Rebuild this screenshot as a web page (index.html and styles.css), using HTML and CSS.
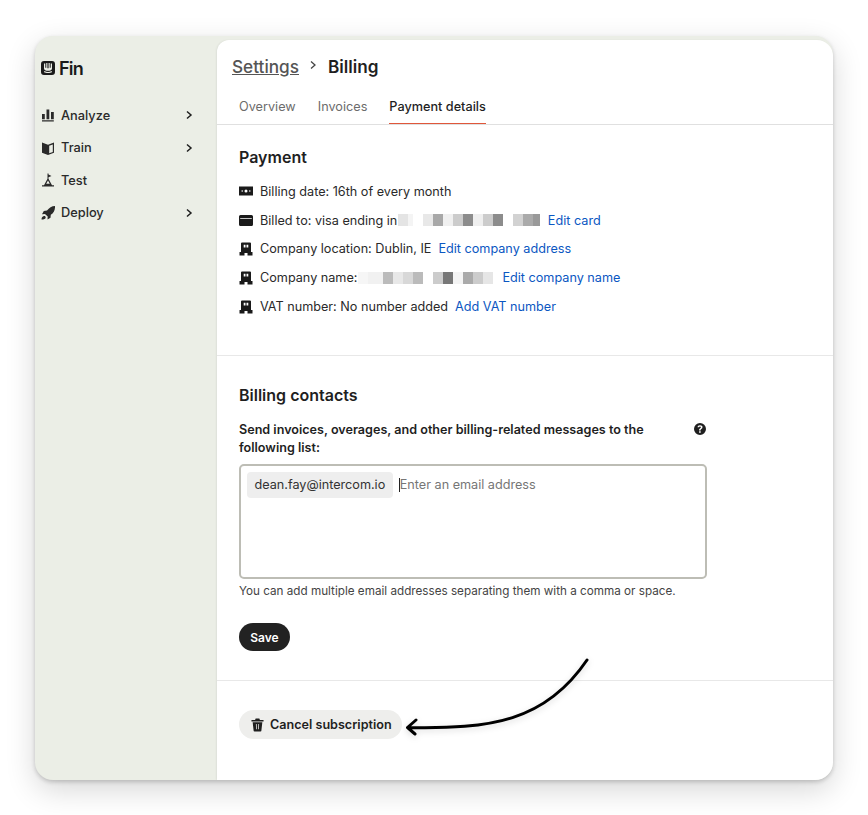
FILE: index.html
```html
<!DOCTYPE html>
<html lang="en">
<head>
    <meta charset="UTF-8">
    <title>Billing</title>
    <link rel="stylesheet" href="styles.css">
</head>
<body>

<div class="window">
    <div class="sidebar">
        <div class="logo">
            <svg class="logo-icon" viewBox="0 0 14 14"><path fill-rule="evenodd" d="M3 0h8a3 3 0 0 1 3 3v8a3 3 0 0 1-3 3H3a3 3 0 0 1-3-3V3a3 3 0 0 1 3-3zM3 2.500v5C3 9.200 4.800 9.800 7 9.800s4-.6 4-2.300v-5h-1.300v4.300H8.700V2H7.600v5.200H6.400V2H5.300v4.800H4.300V2.500zM3.500 10l-.6.900C4 11.700 5.500 12 7 12s3-.3 4.100-1.100l-.6-.9c-.9.6-2.200.9-3.500.9s-2.600-.3-3.500-.9z"/></svg>
            <span>Fin</span>
        </div>
        <nav class="nav">
            <div class="nav-item">
                <svg class="nav-icon" viewBox="0 0 14 14"><path d="M1 6h2.800v5.200H1zM5.500 1.500h2.800v9.700H5.500zM10 4h2.800v7.200H10zM1 12.200h11.800v1.300H1z"/></svg>
                <span class="nav-label">Analyze</span>
                <svg class="nav-chevron" viewBox="0 0 10 10"><path d="M3 1.500 7 5 3 8.500"/></svg>
            </div>
            <div class="nav-item">
                <svg class="nav-icon" viewBox="0 0 14 14"><path fill-rule="evenodd" d="M1 1.500l6 2.300 6-2.300v10.200l-6 2.300-6-2.300zM8.200 4.700v7.500l3.600-1.300V3.400z"/></svg>
                <span class="nav-label">Train</span>
                <svg class="nav-chevron" viewBox="0 0 10 10"><path d="M3 1.500 7 5 3 8.500"/></svg>
            </div>
            <div class="nav-item">
                <svg class="nav-icon" viewBox="0 0 14 14"><path fill-rule="evenodd" d="M6.500.5h1v1L10.500 3 7.500 4.300v1.500L11 12.300h2v1.200H1v-1.200h2L6.500 5.800zM7 7.500 5.200 10.800h3.600z"/></svg>
                <span class="nav-label">Test</span>
            </div>
            <div class="nav-item">
                <svg class="nav-icon" viewBox="0 0 14 14"><path d="M14 0c.2 3.800-1.200 6.700-4.200 8.800l-.3 3-3 1.700.2-3-2.700-2.600-3 .3L2.800 5l3.200-.4C8.200 1.700 10.700.1 14 0zM3.300 10c.8 0 1.400.6 1.400 1.400 0 1.300-1.800 2.100-4.200 2.200 0-2.200 1.300-3.600 2.800-3.600z"/></svg>
                <span class="nav-label">Deploy</span>
                <svg class="nav-chevron" viewBox="0 0 10 10"><path d="M3 1.500 7 5 3 8.500"/></svg>
            </div>
        </nav>
    </div>

    <div class="main">
        <div class="header">
            <div class="breadcrumb">
                <a class="crumb-link">Settings</a>
                <svg class="crumb-chevron" viewBox="0 0 10 10"><path d="M3 1.500 7 5 3 8.500"/></svg>
                <span class="crumb-current">Billing</span>
            </div>
            <div class="tabs">
                <span class="tab">Overview</span>
                <span class="tab">Invoices</span>
                <span class="tab tab-active">Payment details</span>
            </div>
        </div>

        <div class="section section-payment">
            <h2>Payment</h2>
            <div class="rows">
                <div class="row">
                    <svg class="row-icon" viewBox="0 0 14 14"><path fill-rule="evenodd" d="M0 2.500h14v9H0zM7 5.500a1.500 1.500 0 1 0 0 3 1.500 1.500 0 0 0 0-3zM3.200 6.200a.8.8 0 1 0 0 1.600.8.8 0 0 0 0-1.600zM10.800 6.200a.8.8 0 1 0 0 1.600.8.8 0 0 0 0-1.600z"/></svg>
                    <span>Billing date: 16th of every month</span>
                </div>
                <div class="row">
                    <svg class="row-icon" viewBox="0 0 14 14"><path fill-rule="evenodd" d="M1.500 2h11A1.500 1.500 0 0 1 14 3.500v8a1.500 1.500 0 0 1-1.500 1.500h-11A1.500 1.500 0 0 1 0 11.500v-8A1.500 1.500 0 0 1 1.500 2zM1.200 5.200v.8h11.600v-.8z"/></svg>
                    <span>Billed to: visa ending in</span>
                    <span class="redacted redacted-card"></span>
                    <a class="link link-card">Edit card</a>
                </div>
                <div class="row">
                    <svg class="row-icon" viewBox="0 0 14 14"><use href="#building"/></svg>
                    <span>Company location: Dublin, IE</span>
                    <a class="link">Edit company address</a>
                </div>
                <div class="row">
                    <svg class="row-icon" viewBox="0 0 14 14"><use href="#building"/></svg>
                    <span>Company name:</span>
                    <span class="redacted redacted-company"></span>
                    <a class="link link-company">Edit company name</a>
                </div>
                <div class="row">
                    <svg class="row-icon" viewBox="0 0 14 14"><use href="#building"/></svg>
                    <span>VAT number: No number added</span>
                    <a class="link">Add VAT number</a>
                </div>
            </div>
        </div>

        <div class="section section-contacts">
            <h2>Billing contacts</h2>
            <div class="contacts-form">
                <div class="field-label">
                    <span>Send invoices, overages, and other billing-related messages to the following list:</span>
                    <svg class="help-icon" viewBox="0 0 12 12"><path fill-rule="evenodd" d="M6 0a6 6 0 1 1 0 12A6 6 0 0 1 6 0zM5.100 8.300v1.500h1.600V8.300zM6 2.200c-1.500 0-2.400.8-2.500 2.100h1.500c.1-.6.4-.9 1-.9s.9.300.9.800c0 .4-.2.700-.7 1-.8.500-1.100 1-1.100 1.900v.3h1.500v-.2c0-.5.200-.8.700-1.100.8-.5 1.200-1.100 1.200-2 0-1.200-1-1.900-2.500-1.900z"/></svg>
                </div>
                <div class="email-box">
                    <span class="email-chip">dean.fay@intercom.io</span>
                    <span class="caret"></span>
                    <span class="placeholder">Enter an email address</span>
                </div>
                <p class="hint">You can add multiple email addresses separating them with a comma or space.</p>
            </div>
            <button class="btn-save">Save</button>
        </div>

        <div class="section section-cancel">
            <button class="btn-cancel">
                <svg class="trash-icon" viewBox="0 0 14 14"><path fill-rule="evenodd" d="M5 0h4l.6 1.500H13.500v1.800H.5V1.500h3.900zM1.800 4h10.400l-1 9a1 1 0 0 1-1 1H3.800a1 1 0 0 1-1-1zM5.300 6l.2 5.500h.8L6.100 6zM7.900 6l-.2 5.500h.8L8.700 6z"/></svg>
                Cancel subscription
            </button>
        </div>
    </div>
</div>

<!-- annotation over the screenshot -->
<svg class="arrow" viewBox="0 0 868 815">
    <path d="M587 660C545 722 490 729 408 727.500M416 720 407.500 727.500 415 734"/>
</svg>

<svg class="defs" width="0" height="0">
    <symbol id="building" viewBox="0 0 14 14">
        <path fill-rule="evenodd" d="M3 .5h8a1 1 0 0 1 1 1V10h1.500v3.500h-5V11h-3v2.500h-5V10H2V1.500a1 1 0 0 1 1-1zM4.700 2.800v2.700h1.800V2.800zM7.500 2.800v2.700h1.800V2.800z"/>
    </symbol>
</svg>

</body>
</html>
```

FILE: styles.css
```css
html, body {
    margin: 0;
    padding: 0;
}
body {
    width: 868px;
    height: 815px;
    background-color: #fff;
    font-family: Inter, "Liberation Sans", sans-serif;
    color: #1f1f1f;
    position: relative;
    overflow: hidden;
    padding: 36px 35px 35px;
    box-sizing: border-box;
}
svg {
    fill: currentColor;
}
.defs {
    position: absolute;
}

/* Window */
.window {
    display: flex;
    height: 744px;
    background-color: #ebeee6;
    border-radius: 18px;
    box-shadow: 0 2px 4px rgba(0, 0, 0, 0.18), 0 10px 30px rgba(0, 0, 0, 0.16);
    overflow: hidden;
}

/* Sidebar */
.sidebar {
    width: 182px;
    flex-shrink: 0;
    padding: 22px 6px 0;
    box-sizing: border-box;
}
.logo {
    display: flex;
    align-items: center;
    gap: 4px;
    font-size: 18px;
    font-weight: 600;
    letter-spacing: -0.8px;
    color: #1a1a1a;
    height: 20px;
}
.logo-icon {
    width: 14px;
    height: 14px;
}
.nav {
    margin-top: 20.800px;
}
.nav-item {
    display: flex;
    align-items: center;
    height: 32.500px;
    font-size: 12.800px;
    font-weight: 500;
    color: #2a2a2a;
}
.nav-icon {
    width: 14px;
    height: 14px;
    margin-right: 6px;
}
.nav-label {
    flex: 1;
}
.nav-chevron {
    width: 10px;
    height: 10px;
    margin-right: 17px;
    fill: none;
    stroke: #1f1f1f;
    stroke-width: 1.500;
}

/* Main panel */
.main {
    flex: 1;
    margin-top: 4px;
    background-color: #fff;
    border-radius: 12px 16px 0 0;
    box-shadow: -1px 0 2px rgba(0, 0, 0, 0.06);
}
.header {
    padding: 0 22px;
    border-bottom: 1px solid #e0e0e0;
    height: 85px;
    box-sizing: border-box;
}
.breadcrumb {
    display: flex;
    align-items: center;
    height: 52px;
    margin-left: -7px;
    font-size: 17.200px;
    font-weight: 600;
}
.crumb-link {
    font-weight: 500;
    color: #555;
    text-decoration: underline;
}
.crumb-chevron {
    width: 10px;
    height: 10px;
    margin: 0 10px 2px 9px;
    fill: none;
    stroke: #444;
    stroke-width: 1.300;
}
.tabs {
    display: flex;
    gap: 22px;
    height: 32px;
    font-size: 12.700px;
}
.tab {
    color: #6c6c6c;
    font-weight: 400;
    line-height: 30px;
    height: 32px;
    box-sizing: border-box;
}
.tab-active {
    color: #1f1f1f;
    font-weight: 500;
    border-bottom: 1px solid #e0573a;
}

/* Sections */
.section {
    padding: 0 22px;
    border-bottom: 1px solid #e8e8e8;
}
.section h2 {
    margin: 0;
    font-size: 16px;
    font-weight: 600;
    line-height: 20px;
}
.section-payment {
    padding-top: 22px;
    height: 231px;
    box-sizing: border-box;
}
.rows {
    margin-top: 10px;
}
.row {
    display: flex;
    align-items: center;
    height: 28.800px;
    font-size: 12.650px;
    color: #2a2a2a;
}
.row-icon {
    width: 14px;
    height: 14px;
    margin-right: 7px;
    color: #1a1a1a;
}
.link {
    color: #0b57c2;
    margin-left: 7px;
}
.link-card {
    margin-left: 7.500px;
}
.link-company {
    margin-left: 9px;
}
.redacted {
    display: block;
    height: 12px;
    margin-left: 1px;
}
.redacted-card {
    width: 142px;
    background: linear-gradient(to right,
        #e4e4e4 0 10px, #f4f4f4 10px 15px, #fff 15px 25px, #e8e8e8 25px 35px, #a8a8a8 35px 45px,
        #f0f0f0 45px 55px, #ccc 55px 65px, #8c8c8c 65px 75px, #efefef 75px 85px, #ccc 85px 95px,
        #8c8c8c 95px 105px, #fff 105px 115px, #d2d2d2 115px 125px, #aaa 125px 135px, #999 135px 142px);
}
.redacted-company {
    width: 135px;
    background: linear-gradient(to right,
        #f6f6f6 0 10px, #f1f1f1 10px 25px, #bbb 25px 35px, #e8e8e8 35px 45px, #d8d8d8 45px 55px,
        #bbb 55px 65px, #fff 65px 75px, #ccc 75px 85px, #777 85px 95px, #f4f4f4 95px 105px,
        #aaa 105px 115px, #ccc 115px 125px, #e6e6e6 125px 135px);
}

/* Billing contacts */
.section-contacts {
    padding-top: 29px;
    height: 325px;
    box-sizing: border-box;
}
.contacts-form {
    width: 468px;
    margin-top: 16px;
}
.field-label {
    display: flex;
    justify-content: space-between;
    font-size: 12.600px;
    font-weight: 600;
    line-height: 18px;
    color: #1f1f1f;
}
.field-label span {
    width: 420px;
}
.help-icon {
    width: 12px;
    height: 12px;
    margin: 2px 1px 0 0;
}
.email-box {
    display: flex;
    align-items: flex-start;
    height: 115px;
    margin-top: 7px;
    padding: 6px;
    box-sizing: border-box;
    border: 2px solid #bdbdb5;
    border-radius: 5px;
    font-size: 12.650px;
}
.email-chip {
    background-color: #eeeeee;
    border-radius: 4px;
    padding: 0 7.500px;
    line-height: 26px;
    color: #333;
}
.caret {
    width: 1px;
    height: 14px;
    margin: 6px 0 0 6px;
    background-color: #222;
}
.placeholder {
    line-height: 26px;
    color: #767676;
}
.hint {
    margin: 5px 0 0;
    font-size: 11.700px;
    line-height: 14px;
    color: #444;
}
.btn-save {
    display: block;
    margin-top: 25px;
    height: 28px;
    width: 51px;
    padding: 0;
    border: none;
    border-radius: 14px;
    background-color: #222;
    color: #fff;
    font: 600 12px Inter, sans-serif;
}

/* Cancel */
.section-cancel {
    border-bottom: none;
    padding-top: 29px;
}
.btn-cancel {
    display: flex;
    align-items: center;
    gap: 6px;
    height: 29px;
    padding: 0 10px 0 12px;
    border: none;
    border-radius: 15px;
    background-color: #eeeeec;
    color: #1f1f1f;
    font: 600 12.600px Inter, sans-serif;
}
.trash-icon {
    width: 13px;
    height: 14px;
}

/* Annotation arrow */
.arrow {
    position: absolute;
    left: 0;
    top: 0;
    width: 868px;
    height: 815px;
    fill: none;
    stroke: #000;
    stroke-width: 3;
    stroke-linecap: round;
    stroke-linejoin: round;
    filter: drop-shadow(0 2px 3px rgba(0, 0, 0, 0.15));
    pointer-events: none;
}
```
